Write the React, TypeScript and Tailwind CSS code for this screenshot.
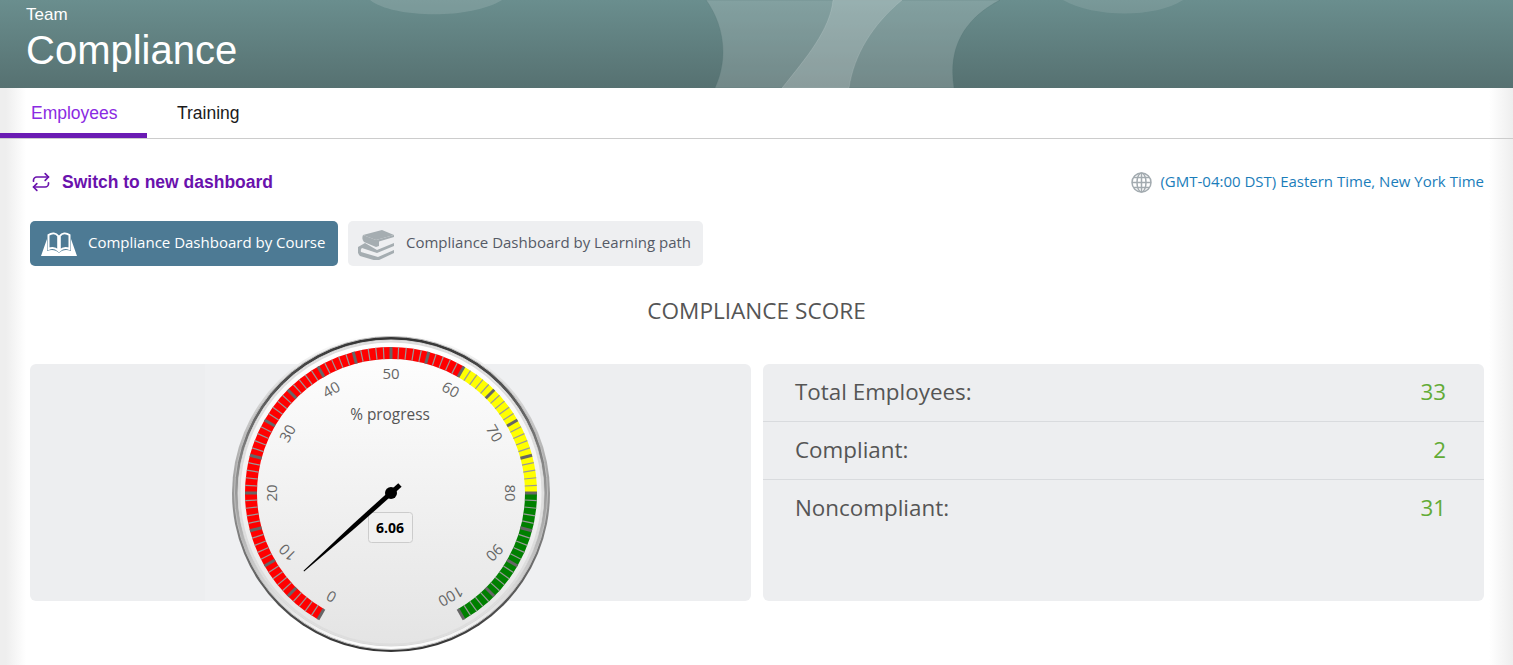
import { Repeat } from "lucide-react";

const CX = 160;
const CY = 160;

const polar = (angle: number, r: number) => {
  const rad = ((angle - 90) * Math.PI) / 180;
  return { x: CX + r * Math.cos(rad), y: CY + r * Math.sin(rad) };
};

const valueToAngle = (v: number) => -150 + v * 3;

function arcPath(from: number, to: number, r: number) {
  const a = polar(valueToAngle(from), r);
  const b = polar(valueToAngle(to), r);
  const large = (to - from) * 3 > 180 ? 1 : 0;
  return `M${a.x} ${a.y} A${r} ${r} 0 ${large} 1 ${b.x} ${b.y}`;
}

const bands = [
  { from: 0, to: 60, color: "#ff0000" },
  { from: 60, to: 80, color: "#ffff00" },
  { from: 80, to: 100, color: "#008000" },
];

function Gauge({ value }: { value: number }) {
  const ticks = Array.from({ length: 101 }, (_, i) => i);
  const labels = Array.from({ length: 11 }, (_, i) => i * 10);
  const needle = valueToAngle(value);

  return (
    <svg width="320" height="320" viewBox="0 0 320 320" className="absolute left-[26px] top-[-31px]">
      <defs>
        <linearGradient id="ring1" x1="0" y1="0" x2="0" y2="1">
          <stop offset="0" stopColor="#ffffff" />
          <stop offset="1" stopColor="#333333" />
        </linearGradient>
        <linearGradient id="ring2" x1="0" y1="0" x2="0" y2="1">
          <stop offset="0" stopColor="#333333" />
          <stop offset="1" stopColor="#ffffff" />
        </linearGradient>
        <linearGradient id="face" x1="0" y1="0" x2="0" y2="1">
          <stop offset="0" stopColor="#ffffff" />
          <stop offset="1" stopColor="#e4e4e4" />
        </linearGradient>
      </defs>
      <circle cx={CX} cy={CY} r="159" fill="url(#ring1)" />
      <circle cx={CX} cy={CY} r="156.5" fill="url(#ring2)" stroke="#c0c0c0" />
      <circle cx={CX} cy={CY} r="153" fill="url(#face)" stroke="#d8d8d8" />
      <circle cx={CX} cy={CY} r="151.5" fill="none" stroke="#dddddd" strokeWidth="2" />
      {bands.map((b) => (
        <path key={b.from} d={arcPath(b.from, b.to, 140)} fill="none" stroke={b.color} strokeWidth="12" />
      ))}
      {ticks.map((t) => {
        const a = polar(valueToAngle(t), 146);
        const b = polar(valueToAngle(t), 134);
        const major = t % 5 === 0;
        return (
          <line
            key={t}
            x1={a.x}
            y1={a.y}
            x2={b.x}
            y2={b.y}
            stroke={major ? "#666666" : "#999999"}
            strokeWidth={major ? 3 : 1.2}
          />
        );
      })}
      {labels.map((l) => {
        const angle = valueToAngle(l);
        const p = polar(angle, 120);
        // the 10 and 90 labels sit a bit flatter in the picture
        const rotation = Math.abs(angle) === 120 ? Math.sign(angle) * 135 : angle;
        return (
          <text
            key={l}
            x={p.x}
            y={p.y}
            textAnchor="middle"
            dominantBaseline="central"
            transform={`rotate(${rotation} ${p.x} ${p.y})`}
            className="fill-[#666666] text-[15px] [font-family:'Open_Sans',sans-serif]"
          >
            {l}
          </text>
        );
      })}
      <text
        x={159}
        y={81}
        textAnchor="middle"
        dominantBaseline="central"
        className="fill-[#555555] text-[15.4px] [font-family:'Open_Sans',sans-serif]"
      >
        % progress
      </text>
      <rect x="137.5" y="179.5" width="44" height="30" rx="3" fill="#f1f1f1" stroke="#cccccc" />
      <text
        x={159}
        y={194}
        textAnchor="middle"
        dominantBaseline="central"
        className="fill-black text-[14px] font-bold [font-family:'Open_Sans',sans-serif]"
      >
        {value.toFixed(2)}
      </text>
      <polygon points="-2.5,12 -2.5,0 -2.2,-50 -0.5,-117 0.5,-117 2.2,-50 2.5,0 2.5,12" fill="#000000" transform={`translate(${CX} ${CY}) rotate(${needle})`} />
      <circle cx={CX} cy={CY} r="6" fill="#000000" />
    </svg>
  );
}

function HeaderArt() {
  return (
    <svg width="1513" height="88" viewBox="0 0 1513 88" className="absolute left-0 top-0" preserveAspectRatio="none">
      <path d="M370 0 C392 18 470 20 502 0 Z" fill="#ffffff" fillOpacity="0.13" />
      <path d="M1063 0 C1095 18 1155 18 1183 0 Z" fill="#ffffff" fillOpacity="0.1" />
      <path d="M706 0 C722 22 730 55 715 88 L954 88 C948 50 962 20 1000 0 Z" fill="#ffffff" fillOpacity="0.17" stroke="#4f6f6f" strokeOpacity="0.25" />
      <path d="M833 0 C830 30 806 58 782 88 L849 88 C854 55 872 25 902 0 Z" fill="#ffffff" fillOpacity="0.17" stroke="#ffffff" strokeOpacity="0.12" />
    </svg>
  );
}

function OpenBookIcon() {
  return (
    <svg width="38" height="28" viewBox="0 0 38 28" className="shrink-0">
      <path d="M1 26 L7 9 L7 21 C12 19 16 20 19 23 C22 20 26 19 31 21 L31 9 L37 26 Z" fill="#ffffff" />
      <path d="M8.5 5 C12 2.5 16 3 18.2 6 L18.2 20.5 C15.5 18 12 17.5 8.5 19 Z" fill="#4d7a94" stroke="#ffffff" strokeWidth="2" />
      <path d="M29.5 5 C26 2.5 22 3 19.8 6 L19.8 20.5 C22.5 18 26 17.5 29.5 19 Z" fill="#4d7a94" stroke="#ffffff" strokeWidth="2" />
    </svg>
  );
}

function BooksIcon() {
  return (
    <svg width="38" height="32" viewBox="0 0 38 32" className="shrink-0">
      <path d="M5 7 L24 2 L36 7 L18 12 Z" fill="#a5adb1" />
      <path d="M5 7 L18 12 L18 19 L6 14 C4 12 4 9 5 7 Z" fill="#a5adb1" />
      <path d="M18 12 L36 7 L36 9 L21 13.5 L21 18 L18 19 Z" fill="#a5adb1" />
      <path d="M7 15 L0 19 C-1 23 0 26 2 28 L19 33 L36 25 L36 22 L20 29 L3 24 C2.5 22 3 21 4 20 L19 25 L36 18 L36 15 L19 22 Z" fill="#a5adb1" />
    </svg>
  );
}

function GlobeIcon() {
  return (
    <svg width="21" height="21" viewBox="0 0 21 21" fill="none" stroke="#a3abb0" strokeWidth="1.5" className="shrink-0">
      <circle cx="10.5" cy="10.5" r="9.5" />
      <ellipse cx="10.5" cy="10.5" rx="4.5" ry="9.5" />
      <path d="M10.5 1 V20 M1 10.5 H20 M2.5 5.5 H18.5 M2.5 15.5 H18.5" />
    </svg>
  );
}

const stats = [
  { label: "Total Employees:", value: 33 },
  { label: "Compliant:", value: 2 },
  { label: "Noncompliant:", value: 31 },
];

export default function App() {
  return (
    <div className="w-[1513px] h-[665px] overflow-hidden bg-white [font-family:'Open_Sans',sans-serif]">
      <header className="relative h-[88px] bg-gradient-to-b from-[#6a8e8e] to-[#567171] pl-[26px] text-white [font-family:'Liberation_Sans',Arial,sans-serif]">
        <HeaderArt />
        <div className="relative pt-[5px] text-[17px] leading-[20px]">Team</div>
        <h1 className="relative mt-[2px] text-[40px] leading-[46px]">Compliance</h1>
      </header>

      <div className="h-[577px] bg-[linear-gradient(to_right,#eeeeee_6px,#ffffff_26px,#ffffff_calc(100%-24px),#eeeeee)]">
        <nav className="flex h-[51px] border-b border-[#cccccc] text-[17.5px] [font-family:'Liberation_Sans',Arial,sans-serif]">
          <div className="flex h-[50px] w-[147px] items-center border-b-[5px] border-[#6a1bb3] pl-[31px] pt-[6px] text-[#8a2be2]">Employees</div>
          <div className="flex h-[50px] items-center pl-[30px] pt-[1px] text-[#1a1a1a]">Training</div>
        </nav>

        <div className="px-[29px]">
          <div className="mt-[28px] flex h-[30px] items-center justify-between">
            <a className="flex items-center gap-[11px] pl-[2px] text-[17.5px] font-bold text-[#6a12ad] [font-family:'Liberation_Sans',Arial,sans-serif]">
              <Repeat size={20} strokeWidth={2} />
              Switch to new dashboard
            </a>
            <div className="flex items-center gap-[8px] text-[15px] text-[#1b7dba]">
              <GlobeIcon />
              <span className="mb-[1px]">(GMT-04:00 DST) Eastern Time, New York Time</span>
            </div>
          </div>

          <div className="ml-[1px] mt-[24px] flex gap-[10px] text-[15px]">
            <button className="flex h-[45px] w-[308px] items-center gap-[10px] rounded-[5px] bg-[#4d7a94] pl-[10px] text-white">
              <OpenBookIcon />
              <span className="mb-[3px]">Compliance Dashboard by Course</span>
            </button>
            <button className="flex h-[45px] w-[355px] items-center gap-[10px] rounded-[5px] bg-[#eeeff1] pl-[10px] text-[#555a66]">
              <BooksIcon />
              <span className="mb-[3px]">Compliance Dashboard by Learning path</span>
            </button>
          </div>

          <h2 className="mt-[28px] text-center text-[22.6px] leading-[34px] text-[#555555]">COMPLIANCE SCORE</h2>

          <div className="ml-[1px] mt-[36px] flex gap-[12px]">
            <div className="h-[237px] w-[721px] rounded-[6px] bg-[#edeef0]">
              <div className="relative ml-[175px] h-full w-[375px] bg-[#eff0f2]">
                <Gauge value={6.06} />
              </div>
            </div>
            <div className="h-[237px] w-[721px] rounded-[6px] bg-[#edeef0]">
              {stats.map((s, i) => (
                <div
                  key={s.label}
                  className={`flex h-[58px] items-center justify-between pb-[2px] pl-[32px] pr-[38px] text-[22.4px] ${i < 2 ? "border-b border-[#d9dbde]" : ""}`}
                >
                  <span className="text-[#555555]">{s.label}</span>
                  <span className="text-[#62ab36]">{s.value}</span>
                </div>
              ))}
            </div>
          </div>
        </div>
      </div>
    </div>
  );
}
